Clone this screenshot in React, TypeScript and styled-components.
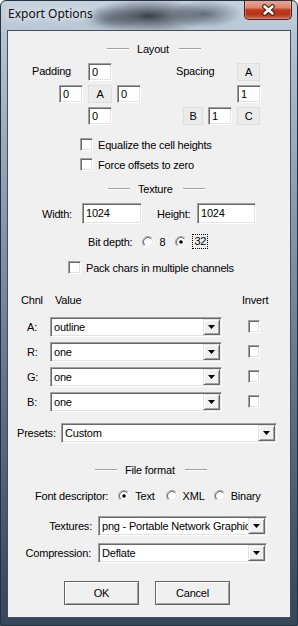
import { FC, ReactNode } from 'react';
import styled, { createGlobalStyle, css } from 'styled-components';

const GlobalStyle = createGlobalStyle`
  html, body {
    margin: 0;
    padding: 0;
    background: #fff;
  }
  body {
    font-family: 'Liberation Sans', Arial, sans-serif;
    font-size: 11px;
    letter-spacing: -0.2px;
    color: #000;
  }
  * {
    box-sizing: border-box;
  }
`;

const sunken = css`
  background: #fff;
  border: 1px solid;
  border-color: #a0a0a0 #fff #fff #a0a0a0;
  box-shadow: inset 1px 1px 0 #696969, inset -1px -1px 0 #e3e3e3;
`;

const raised = css`
  background: #f0f0f0;
  border: 1px solid;
  border-color: #e3e3e3 #696969 #696969 #e3e3e3;
  box-shadow: inset 1px 1px 0 #fff, inset -1px -1px 0 #a0a0a0;
`;

const Frame = styled.div`
  width: 298px;
  height: 626px;
  display: flex;
  flex-direction: column;
  padding: 0 6px 7px;
  border: 1px solid #25323f;
  border-radius: 6px 6px 0 0;
  background:
    radial-gradient(ellipse 62px 17px at 148px 15px, rgba(32, 40, 50, 0.85), rgba(32, 40, 50, 0)),
    radial-gradient(ellipse 36px 14px at 205px 13px, rgba(45, 55, 66, 0.6), rgba(45, 55, 66, 0)),
    radial-gradient(ellipse 30px 12px at 110px 18px, rgba(60, 72, 84, 0.45), rgba(60, 72, 84, 0)),
    linear-gradient(180deg, #c6d2de 0px, #b4c3d1 40px, #8a9cad 200px, #5a6c7e 420px, #33465a 626px);
  overflow: hidden;
`;

const TitleBar = styled.div`
  height: 29px;
  display: flex;
  align-items: flex-start;
  justify-content: space-between;
`;

const Title = styled.span`
  font-family: 'Noto Sans', 'Open Sans', sans-serif;
  font-size: 12px;
  line-height: 16px;
  letter-spacing: 0;
  padding: 5px 0 0 1px;
  color: #0a0f14;
  text-shadow: 0 0 6px rgba(255, 255, 255, 0.9), 0 0 10px rgba(255, 255, 255, 0.7);
`;

const CloseButton = styled.div`
  width: 48px;
  height: 20px;
  margin: -1px -1px 0 0;
  border: 1px solid #4e1d15;
  border-top: none;
  border-radius: 0 0 5px 5px;
  background: linear-gradient(180deg, #e9ab9c 0%, #dc8570 40%, #c0391f 52%, #b8331b 75%, #d0664a 100%);
  box-shadow: inset 0 0 0 1px rgba(255, 220, 210, 0.35);
  display: flex;
  align-items: center;
  justify-content: center;
`;

const Client = styled.div`
  flex: 1;
  display: flex;
  flex-direction: column;
  background: #f0f0f0;
  border: 1px solid #404f5e;
`;

const Row = styled.div<{ $mt: number; $pl?: number; $h?: number }>`
  display: flex;
  align-items: center;
  margin-top: ${p => p.$mt}px;
  padding-left: ${p => p.$pl ?? 0}px;
  height: ${p => p.$h ?? 13}px;
  white-space: nowrap;
`;

const Rule = styled.span`
  width: 22px;
  height: 2px;
  border-top: 1px solid #a0a0a0;
  border-bottom: 1px solid #fff;
`;

const HeaderText = styled.span`
  margin: 0 10px 0 8px;
`;

const Label = styled.span<{ $w?: number; $ml?: number; $right?: boolean }>`
  display: inline-block;
  width: ${p => (p.$w ? `${p.$w}px` : 'auto')};
  margin-left: ${p => p.$ml ?? 0}px;
  text-align: ${p => (p.$right ? 'right' : 'left')};
  flex-shrink: 0;
`;

const Edit = styled.div<{ $w: number; $h?: number }>`
  ${sunken};
  width: ${p => p.$w}px;
  height: ${p => p.$h ?? 18}px;
  padding: ${p => ((p.$h ?? 18) > 19 ? '2px 0 0 3px' : '1px 0 0 3px')};
  line-height: 14px;
  flex-shrink: 0;
`;

const Tag = styled.div<{ $w: number }>`
  width: ${p => p.$w}px;
  height: 18px;
  background: #ebebeb;
  border: 1px solid #dedede;
  display: flex;
  align-items: center;
  justify-content: center;
`;

const OffsetGrid = styled.div<{ $cols: string }>`
  display: grid;
  grid-template-columns: ${p => p.$cols};
  grid-template-rows: repeat(3, 18px);
  column-gap: 5px;
  row-gap: 4px;
`;

const GridLabel = styled.span<{ $shift?: number }>`
  grid-column: 1 / span 2;
  align-self: center;
  margin-left: ${p => p.$shift ?? 0}px;
  margin-top: -3px;
`;

const Cell = styled.div<{ $col: number; $row: number }>`
  grid-column: ${p => p.$col};
  grid-row: ${p => p.$row};
  display: flex;
`;

const CheckBox = styled.span<{ $w?: number }>`
  ${sunken};
  display: inline-block;
  width: ${p => p.$w ?? 13}px;
  height: 13px;
  flex-shrink: 0;
`;

const CheckText = styled.span`
  margin-left: 5px;
`;

const Choice = styled.span<{ $ml: number }>`
  display: flex;
  align-items: center;
  gap: 5px;
  margin-left: ${p => p.$ml}px;
`;

const Focus = styled.span`
  border: 1px dotted #000;
  padding: 0 1px;
  line-height: 13px;
`;

const Combo = styled.div<{ $w: number }>`
  ${sunken};
  width: ${p => p.$w}px;
  height: 20px;
  display: flex;
  align-items: center;
  padding-left: 3px;
  flex-shrink: 0;
`;

const ComboText = styled.span`
  flex: 1;
  overflow: hidden;
  white-space: nowrap;
`;

const DropButton = styled.span`
  ${raised};
  width: 17px;
  height: 16px;
  margin-right: 1px;
  display: flex;
  align-items: center;
  justify-content: center;
  flex-shrink: 0;
`;

const ChannelRows = styled.div`
  display: flex;
  flex-direction: column;
  gap: 4px;
  margin-top: 10px;
`;

const ButtonRow = styled.div`
  display: flex;
  gap: 16px;
  margin-top: 18px;
  padding-left: 56px;
`;

const PushButton = styled.button`
  width: 75px;
  height: 24px;
  font: inherit;
  letter-spacing: inherit;
  color: #000;
  background: #f0f0f0;
  border: 1px solid #646464;
  box-shadow: inset 1px 1px 0 #fff, inset -1px -1px 0 #a0a0a0;
  padding: 0;
`;

const Radio: FC<{ checked?: boolean }> = ({ checked }) => (
  <svg width="12" height="12" viewBox="0 0 12 12">
    <defs>
      <linearGradient id="ro" x1="0" y1="0" x2="1" y2="1">
        <stop offset="0.45" stopColor="#a0a0a0" />
        <stop offset="0.55" stopColor="#ffffff" />
      </linearGradient>
      <linearGradient id="ri" x1="0" y1="0" x2="1" y2="1">
        <stop offset="0.45" stopColor="#696969" />
        <stop offset="0.55" stopColor="#e3e3e3" />
      </linearGradient>
    </defs>
    <circle cx="6" cy="6" r="5.5" fill="none" stroke="url(#ro)" />
    <circle cx="6" cy="6" r="4.5" fill="#fff" stroke="url(#ri)" />
    {checked && <circle cx="6" cy="6" r="1.8" fill="#000" />}
  </svg>
);

const Arrow = () => (
  <svg width="7" height="4" viewBox="0 0 7 4">
    <polygon points="0,0 7,0 3.5,4" fill="#000" />
  </svg>
);

const CloseGlyph = () => (
  <svg width="15" height="12" viewBox="0 0 15 12">
    <path d="M3.5 2.5 L11.5 9.5 M11.5 2.5 L3.5 9.5" stroke="#3a1a14" strokeWidth="4.6" strokeLinecap="round" />
    <path d="M3.5 2.5 L11.5 9.5 M11.5 2.5 L3.5 9.5" stroke="#fff" strokeWidth="2.6" strokeLinecap="round" />
  </svg>
);

const Header: FC<{ mt: number; pl: number; children: ReactNode }> = ({ mt, pl, children }) => (
  <Row $mt={mt} $pl={pl}>
    <Rule />
    <HeaderText>{children}</HeaderText>
    <Rule />
  </Row>
);

const Select: FC<{ w: number; value: string }> = ({ w, value }) => (
  <Combo $w={w}>
    <ComboText>{value}</ComboText>
    <DropButton>
      <Arrow />
    </DropButton>
  </Combo>
);

const channels = [
  { name: 'A:', value: 'outline' },
  { name: 'R:', value: 'one' },
  { name: 'G:', value: 'one' },
  { name: 'B:', value: 'one' },
];

export default function App() {
  return (
    <>
      <GlobalStyle />
      <Frame>
        <TitleBar>
          <Title>Export Options</Title>
          <CloseButton>
            <CloseGlyph />
          </CloseButton>
        </TitleBar>
        <Client>
          <Header mt={11} pl={99}>Layout</Header>

          <Row $mt={8} $pl={24} $h={62}>
            <OffsetGrid $cols="22px 24px 24px 24px">
              <GridLabel>Padding</GridLabel>
              <Cell $col={3} $row={1}><Edit $w={24}>0</Edit></Cell>
              <Cell $col={2} $row={2}><Edit $w={24}>0</Edit></Cell>
              <Cell $col={3} $row={2}><Tag $w={24}>A</Tag></Cell>
              <Cell $col={4} $row={2}><Edit $w={24}>0</Edit></Cell>
              <Cell $col={3} $row={3}><Edit $w={24}>0</Edit></Cell>
            </OffsetGrid>
            <Label $ml={42} />
            <OffsetGrid $cols="20px 24px 23px">
              <GridLabel $shift={-7}>Spacing</GridLabel>
              <Cell $col={3} $row={1}><Tag $w={23}>A</Tag></Cell>
              <Cell $col={3} $row={2}><Edit $w={24}>1</Edit></Cell>
              <Cell $col={1} $row={3}><Tag $w={20}>B</Tag></Cell>
              <Cell $col={2} $row={3}><Edit $w={24}>1</Edit></Cell>
              <Cell $col={3} $row={3}><Tag $w={23}>C</Tag></Cell>
            </OffsetGrid>
          </Row>

          <Row $mt={13} $pl={72}>
            <CheckBox />
            <CheckText>Equalize the cell heights</CheckText>
          </Row>
          <Row $mt={7} $pl={72}>
            <CheckBox />
            <CheckText>Force offsets to zero</CheckText>
          </Row>

          <Header mt={11} pl={100}>Texture</Header>

          <Row $mt={8} $pl={34} $h={21}>
            <Label $w={40}>Width:</Label>
            <Edit $w={60} $h={21}>1024</Edit>
            <Label $w={40} $ml={15}>Height:</Label>
            <Edit $w={59} $h={21}>1024</Edit>
          </Row>

          <Row $mt={10} $pl={80} $h={15}>
            <Label>Bit depth:</Label>
            <Choice $ml={10}>
              <Radio />
              <span>8</span>
            </Choice>
            <Choice $ml={10}>
              <Radio checked />
              <Focus>32</Focus>
            </Choice>
          </Row>

          <Row $mt={12} $pl={60}>
            <CheckBox />
            <CheckText>Pack chars in multiple channels</CheckText>
          </Row>

          <Row $mt={19} $pl={13}>
            <Label $w={34}>Chnl</Label>
            <Label $w={187}>Value</Label>
            <Label>Invert</Label>
          </Row>

          <ChannelRows>
            {channels.map(ch => (
              <Row key={ch.name} $mt={0} $pl={19} $h={21}>
                <Label $w={23}>{ch.name}</Label>
                <Select w={172} value={ch.value} />
                <Label $ml={26} />
                <CheckBox $w={12} />
              </Row>
            ))}
          </ChannelRows>

          <Row $mt={11} $pl={9} $h={20}>
            <Label $w={44}>Presets:</Label>
            <Select w={216} value="Custom" />
          </Row>

          <Header mt={20} pl={87}>File format</Header>

          <Row $mt={13} $pl={27}>
            <Label>Font descriptor:</Label>
            <Choice $ml={10}>
              <Radio checked />
              <span>Text</span>
            </Choice>
            <Choice $ml={11}>
              <Radio />
              <span>XML</span>
            </Choice>
            <Choice $ml={9}>
              <Radio />
              <span>Binary</span>
            </Choice>
          </Row>

          <Row $mt={14} $h={20}>
            <Label $w={84} $right>Textures:</Label>
            <Label $ml={6} />
            <Select w={169} value="png - Portable Network Graphics" />
          </Row>
          <Row $mt={7} $h={20}>
            <Label $w={83} $right>Compression:</Label>
            <Label $ml={7} />
            <Select w={169} value="Deflate" />
          </Row>

          <ButtonRow>
            <PushButton>OK</PushButton>
            <PushButton>Cancel</PushButton>
          </ButtonRow>
        </Client>
      </Frame>
    </>
  );
}
